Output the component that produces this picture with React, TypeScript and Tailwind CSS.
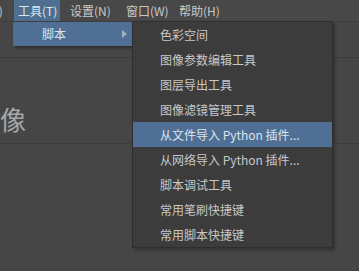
import React from "react";

const items = [
  "色彩空间",
  "图像参数编辑工具",
  "图层导出工具",
  "图像滤镜管理工具",
  "从文件导入 Python 插件...",
  "从网络导入 Python 插件...",
  "脚本调试工具",
  "常用笔刷快捷键",
  "常用脚本快捷键",
];

export default function App() {
  return (
    <div
      className="relative w-[359px] h-[271px] overflow-hidden bg-[#464646] text-[12px] text-[#c8c8c8]"
      style={{ fontFamily: '"Noto Sans CJK SC", "Noto Sans", sans-serif' }}
    >
      {/* menubar */}
      <div className="flex h-[21px] items-stretch bg-[#484848] border-b border-[#3e3e3e] box-content">
        <div className="flex items-center ml-[-40px] w-[54px] pl-[4px]">文件(F)</div>
        <div className="flex items-center bg-[#4f6f90] w-[46px] pl-[4px] text-[#dce4ec]">工具(T)</div>
        <div className="flex items-center w-[56px] pl-[10px]">设置(N)</div>
        <div className="flex items-center w-[58px] pl-[10px]">窗口(W)</div>
        <div className="flex items-center pl-[5px]">帮助(H)</div>
      </div>
      {/* content */}
      <div className="h-[36px] border-b border-[#3c3c3c]" />
      <div className="h-[86px] border-b border-[#3c3c3c] flex items-start">
        <span className="text-[26px] text-[#a4a8ac] ml-[-26px] mt-[48px] leading-none whitespace-nowrap">图像</span>
      </div>

      {/* 工具 dropdown */}
      <div className="absolute left-[13px] top-[22px] w-[119px] h-[24px] bg-[#4f7094] shadow-[2px_2px_3px_rgba(0,0,0,0.35)] flex items-center pl-[29px] text-[#dce4ec]">
        脚本
        <svg className="absolute right-[5px] top-[8px]" width="5" height="8" viewBox="0 0 5 8">
          <path d="M0 0 L5 4 L0 8 Z" fill="#9fb0c2" />
        </svg>
      </div>

      {/* submenu */}
      <div className="absolute left-[132px] top-[21px] w-[201px] border border-[#2e2e2e] bg-[#3c3c3c] shadow-[2px_2px_3px_rgba(0,0,0,0.3)]">
        {items.map((t, i) => (
          <div
            key={t}
            className={
              "h-[25px] flex items-center pl-[27px] whitespace-pre " +
              (i === 4 ? "bg-[#4f7094] text-[#dce4ec]" : "")
            }
          >
            {t}
          </div>
        ))}
      </div>
    </div>
  );
}
